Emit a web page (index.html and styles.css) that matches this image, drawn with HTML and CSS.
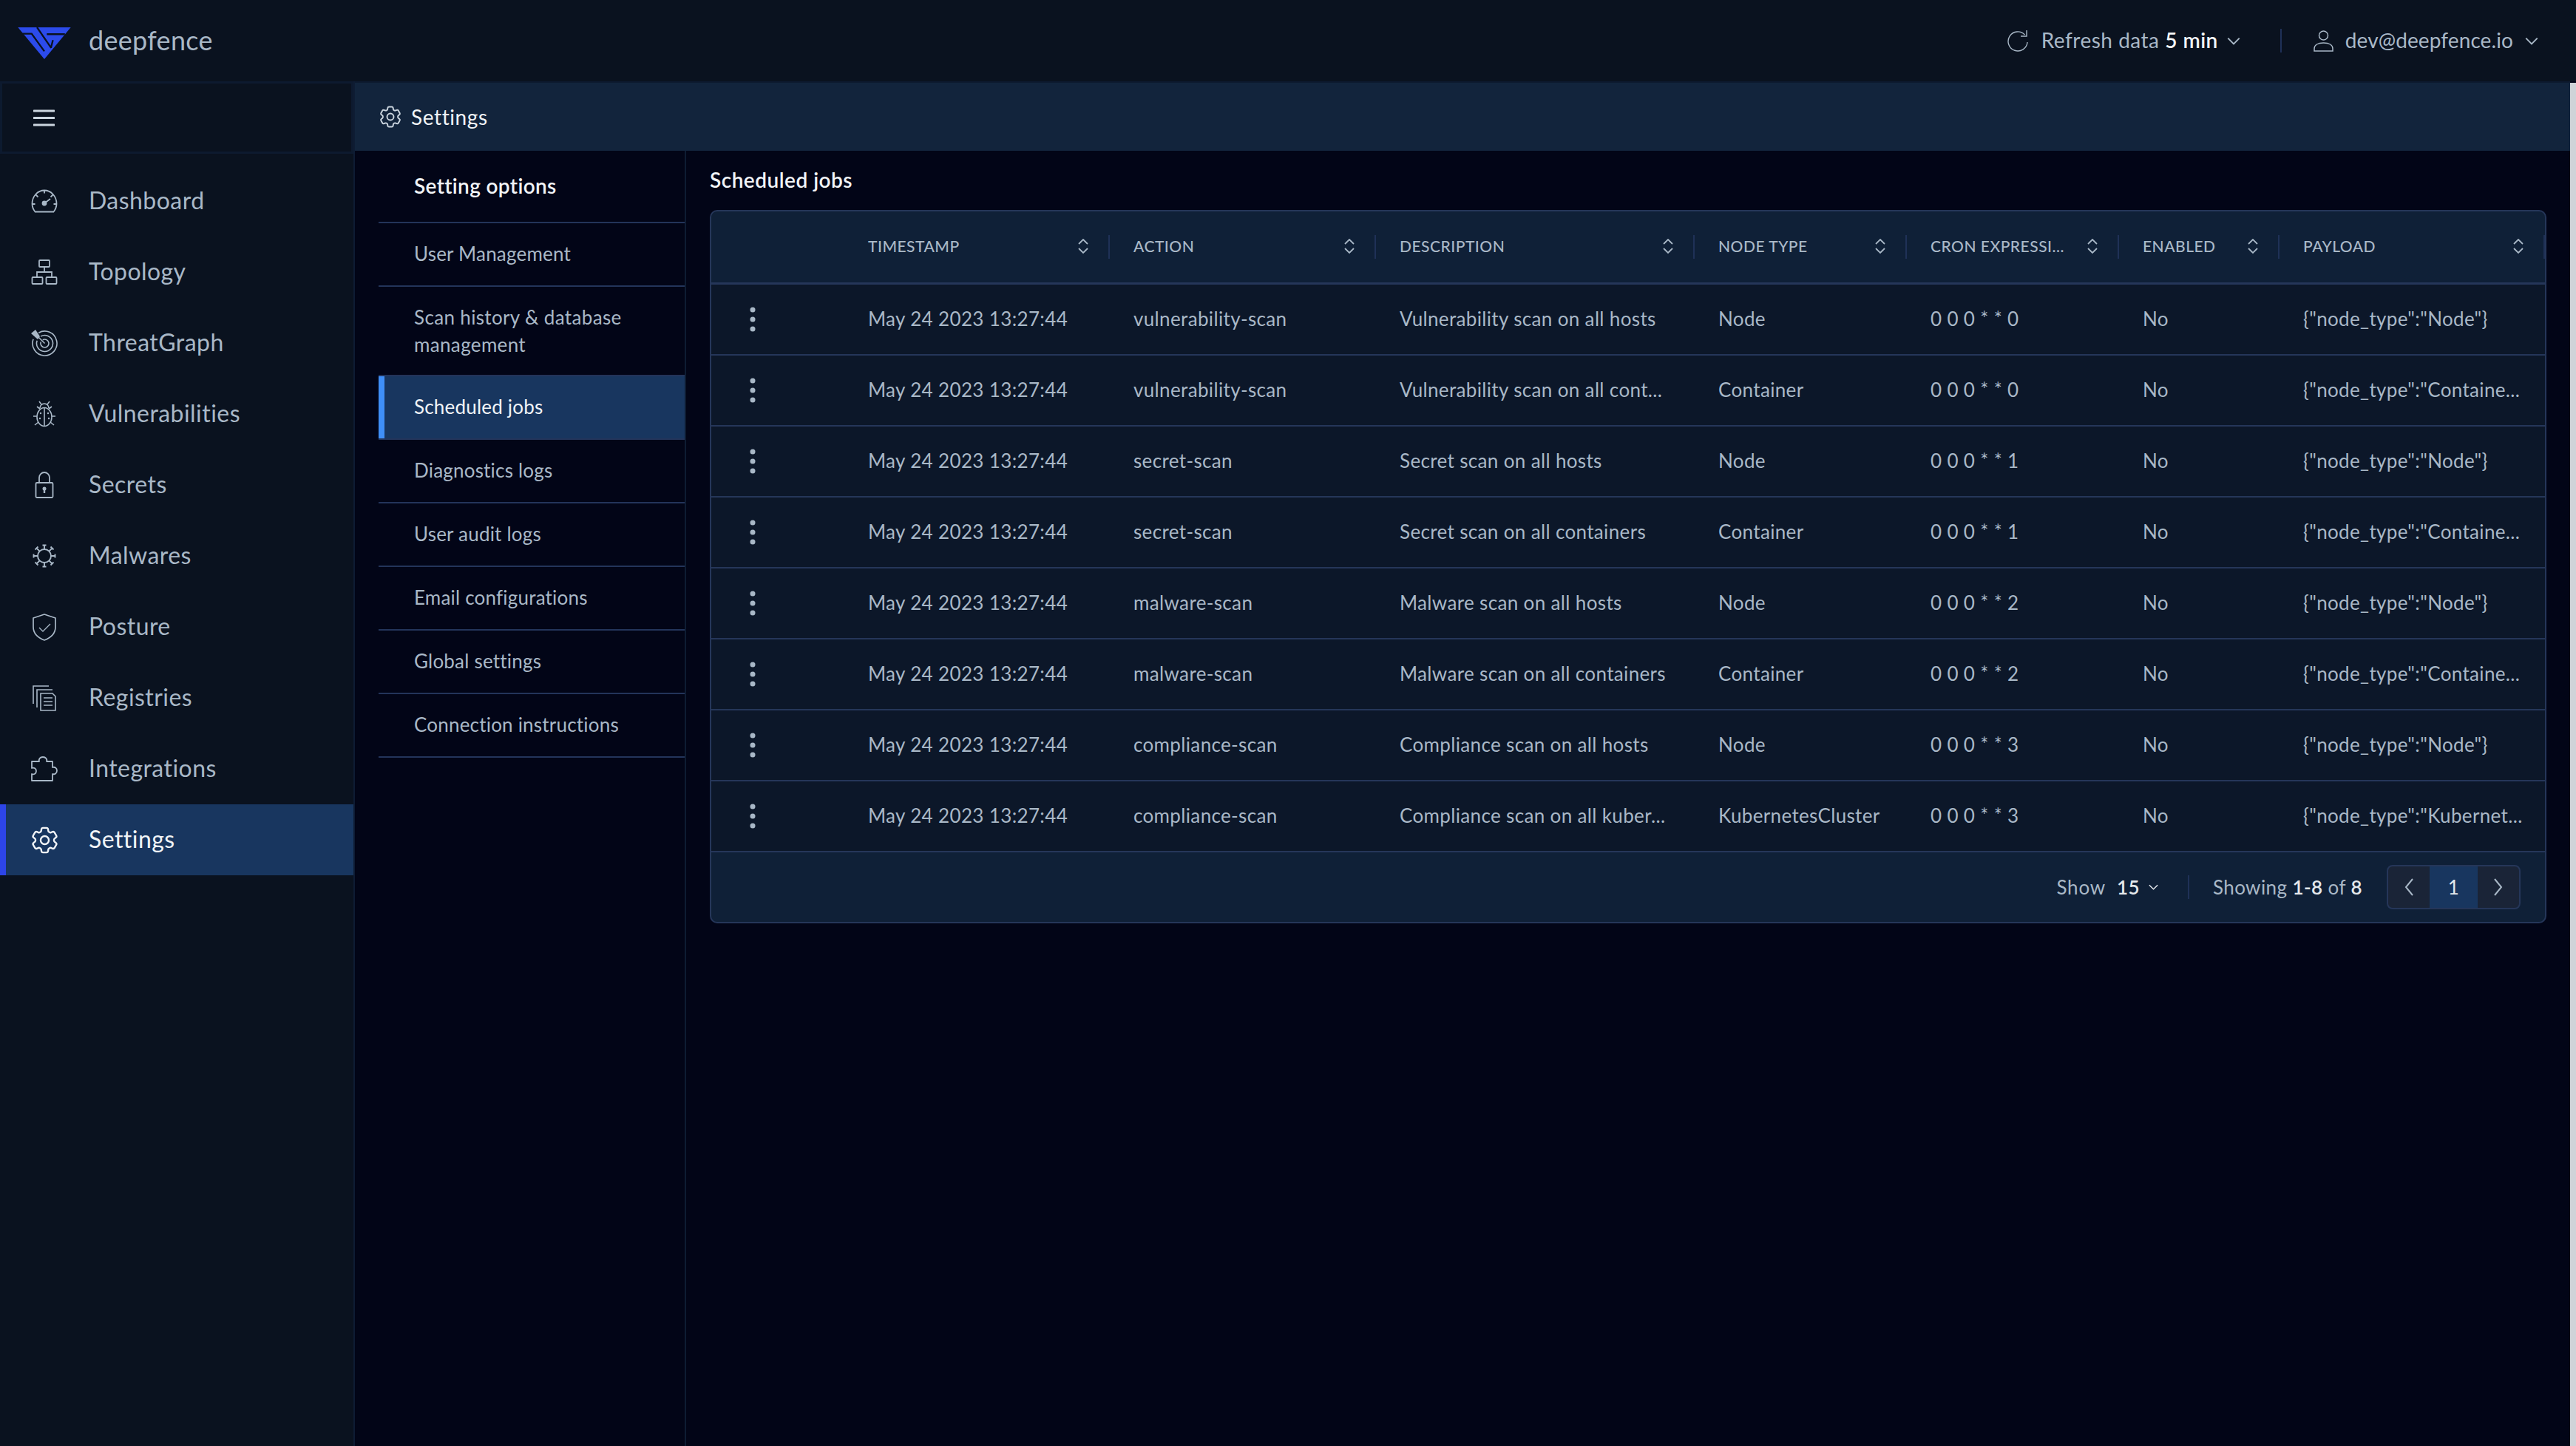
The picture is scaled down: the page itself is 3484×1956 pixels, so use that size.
FILE: index.html
```html
<!DOCTYPE html>
<html lang="en">
<head>
<meta charset="utf-8">
<title>Scheduled jobs</title>
<link rel="stylesheet" href="styles.css">
</head>
<body>
<svg class="defs" xmlns="http://www.w3.org/2000/svg">
  <symbol id="gear" viewBox="2 2 20 20"><path d="M9.594 3.94c.09-.542.56-.94 1.11-.94h2.593c.55 0 1.02.398 1.11.94l.213 1.281c.063.374.313.686.645.87.074.04.147.083.22.127.324.196.72.257 1.075.124l1.217-.456a1.125 1.125 0 011.37.49l1.296 2.247a1.125 1.125 0 01-.26 1.431l-1.003.827c-.293.24-.438.613-.431.992a6.759 6.759 0 010 .255c-.007.378.138.75.43.99l1.005.828c.424.35.534.954.26 1.43l-1.298 2.247a1.125 1.125 0 01-1.369.491l-1.217-.456c-.355-.133-.75-.072-1.076.124a6.57 6.57 0 01-.22.128c-.331.183-.581.495-.644.869l-.213 1.28c-.09.543-.56.941-1.11.941h-2.594c-.55 0-1.02-.398-1.11-.94l-.213-1.281c-.062-.374-.312-.686-.644-.87a6.52 6.52 0 01-.22-.127c-.325-.196-.72-.257-1.076-.124l-1.217.456a1.125 1.125 0 01-1.369-.49l-1.297-2.247a1.125 1.125 0 01.26-1.431l1.004-.827c.292-.24.437-.613.43-.992a6.932 6.932 0 010-.255c.007-.378-.138-.75-.43-.99l-1.004-.828a1.125 1.125 0 01-.26-1.43l1.297-2.247a1.125 1.125 0 011.37-.491l1.216.456c.356.133.751.072 1.076-.124.072-.044.146-.087.22-.128.332-.183.582-.495.644-.869l.214-1.281z" fill="none" stroke="currentColor" stroke-width="1.3" stroke-linejoin="round"/><circle cx="12" cy="12" r="3" fill="none" stroke="currentColor" stroke-width="1.3"/></symbol>
  <symbol id="sort" viewBox="0 0 14 20"><path d="M1 7l6-6 6 6M1 13l6 6 6-6" fill="none" stroke="currentColor" stroke-width="1.8"/></symbol>
  <symbol id="dots" viewBox="0 0 8 34"><circle cx="4" cy="4" r="3.5" fill="currentColor"/><circle cx="4" cy="17" r="3.500" fill="currentColor"/><circle cx="4" cy="30" r="3.5" fill="currentColor"/></symbol>
  <symbol id="chev" viewBox="0 0 16 10"><path d="M1 1.500l7 7 7-7" fill="none" stroke="currentColor" stroke-width="1.8"/></symbol>
</svg>

<div class="app">
  <header class="topbar">
    <div class="brand">
      <svg class="logo" viewBox="72 120 216 130" xmlns="http://www.w3.org/2000/svg">
        <polygon points="72,120 288,120 180,250" fill="#2c4bec"/>
        <path d="M90 146h38l52 72M150 120l58 84M190 148h74M215 172l-8 32" fill="none" stroke="#0a121f" stroke-width="7"/>
      </svg>
      <span class="brand-name">deepfence</span>
    </div>
    <div class="top-actions">
      <svg class="refresh-icon" viewBox="0 0 28 30" xmlns="http://www.w3.org/2000/svg"><path d="M23.500 7A13 13 0 1 0 27 17M26 1v8h-8" fill="none" stroke="currentColor" stroke-width="1.400"/></svg>
      <span class="top-text top-refresh">Refresh data <b class="top-strong">5 min</b></span>
      <svg class="top-chev top-chev-near"><use href="#chev"/></svg>
      <span class="top-sep"></span>
      <svg class="user-icon" viewBox="0 0 27 29" xmlns="http://www.w3.org/2000/svg"><circle cx="13.500" cy="7" r="6" fill="none" stroke="currentColor" stroke-width="1.500"/><path d="M1 28v-3c0-5 5-8 12.500-8s12.500 3 12.500 8v3z" fill="none" stroke="currentColor" stroke-width="1.500"/></svg>
      <span class="top-text">dev@deepfence.io</span>
      <svg class="top-chev"><use href="#chev"/></svg>
    </div>
  </header>

  <div class="shell">
    <aside class="sidebar">
      <div class="sidebar-toggle">
        <svg class="burger" viewBox="0 0 29 23" xmlns="http://www.w3.org/2000/svg"><path d="M1 2h27M1 11.500h27M1 21h27" stroke="currentColor" stroke-width="3" stroke-linecap="round"/></svg>
      </div>
      <nav class="side-nav">
        <a class="side-item">
          <span class="side-icon"><svg width="36" height="32" viewBox="0 0 36 32" xmlns="http://www.w3.org/2000/svg" fill="none" stroke="currentColor" stroke-width="1.800"><path d="M5.500 30.500h25c2.400-3 4-6.500 4-11C34.500 9.500 27 1.500 18 1.500S1.500 9.500 1.500 19.500c0 4.500 1.600 8 4 11zM18 1.500v4M6.500 7.500l3 3M29.500 7.500l-3 3M1.500 20h4M34.500 20h-4M18 19l8-6"/><circle cx="18" cy="19" r="2.500" fill="currentColor"/></svg></span>
          <span class="side-text">Dashboard</span>
        </a>
        <a class="side-item">
          <span class="side-icon"><svg width="36" height="34" viewBox="0 0 36 34" xmlns="http://www.w3.org/2000/svg" fill="none" stroke="currentColor" stroke-width="1.800"><rect x="11" y="1" width="14" height="9" rx="1"/><path d="M18 10v7M8 24v-7h20v7"/><rect x="1.500" y="24" width="14" height="9" rx="1"/><rect x="20.500" y="24" width="14" height="9" rx="1"/></svg></span>
          <span class="side-text">Topology</span>
        </a>
        <a class="side-item">
          <span class="side-icon"><svg width="36" height="36" viewBox="0 0 36 36" xmlns="http://www.w3.org/2000/svg" fill="none" stroke="currentColor" stroke-width="1.600"><path d="M10.250 4.200A16.500 16.500 0 1 1 3 12.800M13 9A11 11 0 1 1 8.200 14.700M15.750 13.700A5.500 5.500 0 1 1 13.300 16.600M18.500 18.500L8 8"/><polygon points="0,5 6,0 12,9 9,13" fill="currentColor" stroke="none"/></svg></span>
          <span class="side-text">ThreatGraph</span>
        </a>
        <a class="side-item">
          <span class="side-icon"><svg width="30" height="36" viewBox="0 0 30 36" xmlns="http://www.w3.org/2000/svg" fill="none" stroke="currentColor" stroke-width="1.600"><path d="M9 10a6 6 0 0 1 12 0M8 1l3 4M22 1l-3 4M5 8l4 3M25 8l-4 3M5 21H0M25 21h5M7 29l-5 4M23 29l5 4"/><ellipse cx="15" cy="22" rx="10" ry="12.500"/><path d="M15 10v24"/><circle cx="10" cy="17" r="1.200" fill="currentColor" stroke="none"/><circle cx="20" cy="17" r="1.200" fill="currentColor" stroke="none"/><circle cx="9" cy="24" r="1.200" fill="currentColor" stroke="none"/><circle cx="21" cy="24" r="1.200" fill="currentColor" stroke="none"/></svg></span>
          <span class="side-text">Vulnerabilities</span>
        </a>
        <a class="side-item">
          <span class="side-icon"><svg width="26" height="36" viewBox="0 0 26 36" xmlns="http://www.w3.org/2000/svg" fill="none" stroke="currentColor" stroke-width="1.800"><rect x="1.500" y="15" width="23" height="20" rx="1.500"/><path d="M6 15V8a7 7 0 0 1 14 0v7"/><circle cx="13" cy="23" r="2.500" fill="currentColor" stroke="none"/><path d="M13 24v5" stroke-width="2.400"/></svg></span>
          <span class="side-text">Secrets</span>
        </a>
        <a class="side-item">
          <span class="side-icon"><svg width="32" height="32" viewBox="0 0 32 32" xmlns="http://www.w3.org/2000/svg" fill="none" stroke="currentColor" stroke-width="1.900"><circle cx="16" cy="16" r="9"/><path d="M16 2v5M16 25v5M2 16h5M25 16h5M6 6l3.600 3.600M26 6l-3.600 3.600M6 26l3.600-3.600M26 26l-3.600-3.600M13.500 1.500h5M13.500 30.500h5M1.500 13.500v5M30.500 13.500v5M3.500 7.500l4-4M24.500 3.500l4 4M3.500 24.500l4 4M24.500 28.500l4-4"/></svg></span>
          <span class="side-text">Malwares</span>
        </a>
        <a class="side-item">
          <span class="side-icon"><svg width="32" height="37" viewBox="0 0 32 37" xmlns="http://www.w3.org/2000/svg" fill="none" stroke="currentColor" stroke-width="1.700"><path d="M16 1L31 6V18C31 27 24 33 16 36C8 33 1 27 1 18V6Z" stroke-linejoin="round"/><path d="M9 19l5 5 10-10" stroke-width="1.300"/></svg></span>
          <span class="side-text">Posture</span>
        </a>
        <a class="side-item">
          <span class="side-icon"><svg width="32" height="35" viewBox="0 0 32 35" xmlns="http://www.w3.org/2000/svg" fill="none" stroke="currentColor" stroke-width="1.600"><path d="M1 25V1h21M6 30V6h21M11 34V11h16l4 4v19zM15 17h12M15 22h12M15 27h12"/></svg></span>
          <span class="side-text">Registries</span>
        </a>
        <a class="side-item">
          <span class="side-icon"><svg width="37" height="34" viewBox="0 0 37 34" xmlns="http://www.w3.org/2000/svg" fill="none" stroke="currentColor" stroke-width="1.800"><path d="M1 33V24c3 1 6-.5 6-4s-3-5-6-4V7h10c-1-3 1-6 5-6s6 3 5 6h8v8c3-1 6 1 6 4.500s-3 5.500-6 4.500v9H1z" stroke-linejoin="round"/></svg></span>
          <span class="side-text">Integrations</span>
        </a>
        <a class="side-item side-item-active">
          <span class="side-icon"><svg width="37" height="37"><use href="#gear"/></svg></span>
          <span class="side-text">Settings</span>
        </a>
      </nav>
    </aside>

    <div class="page">
      <div class="page-bar">
        <svg class="bar-icon"><use href="#gear"/></svg>
        <span class="bar-text">Settings</span>
      </div>
      <div class="page-body">
        <nav class="settings-nav">
          <div class="settings-title">Setting options</div>
          <a class="settings-item">User Management</a>
          <a class="settings-item settings-item-tall">Scan history &amp; database<br>management</a>
          <a class="settings-item settings-item-active">Scheduled jobs</a>
          <a class="settings-item">Diagnostics logs</a>
          <a class="settings-item">User audit logs</a>
          <a class="settings-item">Email configurations</a>
          <a class="settings-item">Global settings</a>
          <a class="settings-item">Connection instructions</a>
        </nav>
        <main class="content">
          <h1 class="content-title">Scheduled jobs</h1>
          <div class="table-card">
            <table class="jobs">
              <colgroup>
                <col class="c-menu"><col class="c-time"><col class="c-action"><col class="c-desc"><col class="c-node"><col class="c-cron"><col class="c-enabled"><col class="c-payload">
              </colgroup>
              <thead>
                <tr>
                  <th></th>
                  <th><div class="th-in"><span>TIMESTAMP</span><svg class="sort"><use href="#sort"/></svg></div></th>
                  <th><div class="th-in"><span>ACTION</span><svg class="sort"><use href="#sort"/></svg></div></th>
                  <th><div class="th-in"><span>DESCRIPTION</span><svg class="sort"><use href="#sort"/></svg></div></th>
                  <th><div class="th-in"><span>NODE TYPE</span><svg class="sort"><use href="#sort"/></svg></div></th>
                  <th><div class="th-in"><span>CRON EXPRESSI...</span><svg class="sort"><use href="#sort"/></svg></div></th>
                  <th><div class="th-in"><span>ENABLED</span><svg class="sort"><use href="#sort"/></svg></div></th>
                  <th><div class="th-in"><span>PAYLOAD</span><svg class="sort"><use href="#sort"/></svg></div></th>
                </tr>
              </thead>
              <tbody>
                <tr><td class="td-menu"><svg class="dots"><use href="#dots"/></svg></td><td>May 24 2023 13:27:44</td><td>vulnerability-scan</td><td>Vulnerability scan on all hosts</td><td>Node</td><td>0 0 0 * * 0</td><td>No</td><td>{"node_type":"Node"}</td></tr>
                <tr><td class="td-menu"><svg class="dots"><use href="#dots"/></svg></td><td>May 24 2023 13:27:44</td><td>vulnerability-scan</td><td>Vulnerability scan on all cont...</td><td>Container</td><td>0 0 0 * * 0</td><td>No</td><td>{"node_type":"Containe...</td></tr>
                <tr><td class="td-menu"><svg class="dots"><use href="#dots"/></svg></td><td>May 24 2023 13:27:44</td><td>secret-scan</td><td>Secret scan on all hosts</td><td>Node</td><td>0 0 0 * * 1</td><td>No</td><td>{"node_type":"Node"}</td></tr>
                <tr><td class="td-menu"><svg class="dots"><use href="#dots"/></svg></td><td>May 24 2023 13:27:44</td><td>secret-scan</td><td>Secret scan on all containers</td><td>Container</td><td>0 0 0 * * 1</td><td>No</td><td>{"node_type":"Containe...</td></tr>
                <tr><td class="td-menu"><svg class="dots"><use href="#dots"/></svg></td><td>May 24 2023 13:27:44</td><td>malware-scan</td><td>Malware scan on all hosts</td><td>Node</td><td>0 0 0 * * 2</td><td>No</td><td>{"node_type":"Node"}</td></tr>
                <tr><td class="td-menu"><svg class="dots"><use href="#dots"/></svg></td><td>May 24 2023 13:27:44</td><td>malware-scan</td><td>Malware scan on all containers</td><td>Container</td><td>0 0 0 * * 2</td><td>No</td><td>{"node_type":"Containe...</td></tr>
                <tr><td class="td-menu"><svg class="dots"><use href="#dots"/></svg></td><td>May 24 2023 13:27:44</td><td>compliance-scan</td><td>Compliance scan on all hosts</td><td>Node</td><td>0 0 0 * * 3</td><td>No</td><td>{"node_type":"Node"}</td></tr>
                <tr><td class="td-menu"><svg class="dots"><use href="#dots"/></svg></td><td>May 24 2023 13:27:44</td><td>compliance-scan</td><td>Compliance scan on all kuber...</td><td>KubernetesCluster</td><td>0 0 0 * * 3</td><td>No</td><td>{"node_type":"Kubernet...</td></tr>
              </tbody>
            </table>
            <div class="table-footer">
              <span class="show-label">Show</span>
              <span class="show-value">15</span>
              <svg class="show-chev"><use href="#chev"/></svg>
              <span class="footer-sep"></span>
              <span class="showing">Showing <b class="showing-num">1-8</b> of <b class="showing-num">8</b></span>
              <div class="pager">
                <span class="pager-btn"><svg class="pager-chev" viewBox="0 0 12 24" xmlns="http://www.w3.org/2000/svg"><path d="M11 1L2 12l9 11" fill="none" stroke="currentColor" stroke-width="2"/></svg></span>
                <span class="pager-page">1</span>
                <span class="pager-btn"><svg class="pager-chev" viewBox="0 0 12 24" xmlns="http://www.w3.org/2000/svg"><path d="M1 1l9 11L1 23" fill="none" stroke="currentColor" stroke-width="2"/></svg></span>
              </div>
            </div>
          </div>
        </main>
      </div>
    </div>
    <div class="scrollbar"></div>
  </div>
</div>
</body>
</html>
```

FILE: styles.css
```css
* { box-sizing: border-box; }
html, body { margin: 0; padding: 0; height: 100%; overflow: hidden; }
body {
  background: #020517;
  color: #a9b8c7;
  font-family: "Lato", "Noto Sans", "Liberation Sans", sans-serif;
  font-size: 28px;
}
.defs { display: none; }
.app { display: flex; flex-direction: column; height: 1956px; }

/* top bar */
.topbar {
  flex: none;
  height: 110px;
  display: flex;
  align-items: center;
  justify-content: space-between;
  padding: 0 51px 0 24px;
  background: #0a121f;
}
.brand { display: flex; align-items: center; }
.logo { width: 72px; height: 43px; margin-top: 6px; }
.brand-name { margin-left: 24px; font-size: 36px; color: #a9b8c7; letter-spacing: .3px; padding-bottom: 2px; }
.top-actions { display: flex; align-items: center; }
.top-text { font-size: 28px; color: #a9b8c7; letter-spacing: .1px; padding-bottom: 2px; }
.top-refresh { letter-spacing: .5px; }
.top-strong { font-weight: 600; color: #f3f5f7; }
.refresh-icon { width: 28px; height: 30px; margin-right: 18px; }
.user-icon { width: 27px; height: 29px; margin-right: 16px; }
.top-chev { width: 18px; height: 11px; margin-left: 16px; }
.top-chev-near { margin-left: 12px; }
.top-sep { width: 2px; height: 32px; background: #1f3157; margin: 0 43px 0 54px; }

/* app shell */
.shell { flex: 1; display: flex; min-height: 0; }
.sidebar {
  flex: none;
  width: 480px;
  background: #0a121f;
  border-right: 2px solid #0e1c33;
}
.sidebar-toggle {
  height: 98px;
  display: flex;
  align-items: center;
  padding-left: 42px;
  border: 3px solid #0d1a2f;
}
.burger { width: 29px; height: 23px; color: #cbd5df; }
.side-nav { margin-top: 16px; display: flex; flex-direction: column; }
.side-item {
  height: 96px;
  display: flex;
  align-items: center;
  font-size: 32px;
  color: #a9b8c7;
  letter-spacing: .45px;
}
.side-text { padding-bottom: 3px; }
.side-icon { width: 120px; display: flex; justify-content: center; flex: none; }
.side-item-active {
  background: #18365f;
  color: #f1f4f7;
  box-shadow: inset 8px 0 0 #2d45e8;
}

/* page */
.page { flex: 1; min-width: 0; display: flex; flex-direction: column; }
.page-bar {
  flex: none;
  height: 94px;
  display: flex;
  align-items: center;
  padding-left: 33px;
  background: #12243c;
  border-top: 2px solid #0d1a2f;
  color: #f1f4f7;
  font-size: 28px;
}
.bar-text { letter-spacing: .6px; padding-bottom: 1px; }
.bar-icon { width: 30px; height: 30px; margin-right: 13px; color: #cbd5df; }
.page-body { flex: 1; display: flex; min-height: 0; }

.settings-nav {
  flex: none;
  width: 448px;
  padding-left: 32px;
  border-right: 2px solid #0e1c33;
  display: flex;
  flex-direction: column;
}
.settings-title {
  flex: none;
  height: 98px;
  display: flex;
  align-items: center;
  padding: 0 0 2px 48px;
  border-bottom: 2px solid #23345a;
  font-size: 28px;
  font-weight: 600;
  letter-spacing: .35px;
  color: #f1f4f7;
}
.settings-item {
  flex: none;
  height: 86px;
  display: flex;
  align-items: center;
  padding: 0 0 2px 48px;
  border-bottom: 2px solid #23345a;
  font-size: 26px;
  letter-spacing: .2px;
  line-height: 37px;
  color: #a9b8c7;
}
.settings-item-tall { height: 121px; display: block; padding-top: 23px; letter-spacing: .35px; }
.settings-item-active {
  background: #18365f;
  color: #f1f4f7;
  box-shadow: inset 8px 0 0 #3f8ff7;
}

/* content */
.content { flex: 1; min-width: 0; padding: 19px 32px 0; }
.content-title {
  margin: 0 0 21px;
  height: 40px;
  line-height: 40px;
  font-size: 28px;
  font-weight: 600;
  letter-spacing: .5px;
  color: #f1f4f7;
}
.table-card {
  border: 2px solid #253659;
  border-radius: 10px;
  overflow: hidden;
  background: #0f2037;
}
.jobs { width: 2480px; table-layout: fixed; border-collapse: separate; border-spacing: 0; }
.c-menu { width: 180px; }
.c-time { width: 359px; }
.c-action { width: 360px; }
.c-desc { width: 431px; }
.c-node { width: 287px; }
.c-cron { width: 287px; }
.c-enabled { width: 217px; }
.c-payload { width: 359px; }

.jobs th {
  position: relative;
  height: 99px;
  padding: 0 0 3px;
  text-align: left;
  font-size: 21px;
  font-weight: 500;
  letter-spacing: .5px;
  color: #a9b8c7;
  border-bottom: 3px solid #253659;
}
.jobs th + th::after {
  content: "";
  position: absolute;
  right: 0;
  top: 32px;
  width: 2px;
  height: 32px;
  background: #1f3157;
}
.th-in {
  display: flex;
  align-items: center;
  justify-content: space-between;
  padding: 0 29px 0 32px;
  white-space: nowrap;
}
.sort { width: 14px; height: 20px; flex: none; }
.jobs td {
  height: 96px;
  padding: 0 0 2px 32px;
  background: #0c1729;
  border-bottom: 2px solid #253659;
  font-size: 26px;
  letter-spacing: .35px;
  color: #a9b8c7;
  white-space: nowrap;
  overflow: hidden;
}
.jobs td.td-menu { padding: 0 68px 3px 0; text-align: center; }
.dots { width: 8px; height: 34px; display: inline-block; vertical-align: middle; color: #a9b8c7; }

.table-footer {
  height: 94px;
  display: flex;
  align-items: center;
  justify-content: flex-end;
  padding-right: 33px;
  font-size: 26px;
  letter-spacing: .4px;
}
.show-label { margin-right: 15px; letter-spacing: .8px; }
.show-value { font-weight: 600; color: #e4e8ec; }
.show-chev { width: 13px; height: 8px; margin-left: 12px; color: #e4e8ec; }
.footer-sep { width: 2px; height: 32px; background: #1f3157; margin: 0 32px 0 40px; }
.showing-num { font-weight: 600; color: #e4e8ec; }
.pager {
  display: flex;
  margin-left: 33px;
  height: 60px;
  border: 2px solid #253659;
  border-radius: 8px;
  overflow: hidden;
  background: #1a2437;
}
.pager-btn { width: 56px; display: flex; align-items: center; justify-content: center; }
.pager-chev { width: 12px; height: 24px; }
.pager-page {
  width: 65px;
  display: flex;
  align-items: center;
  justify-content: center;
  background: #18365f;
  color: #e4e8ec;
}

.scrollbar { flex: none; width: 8px; margin-top: 2px; background: #cfd3d8; }
```
